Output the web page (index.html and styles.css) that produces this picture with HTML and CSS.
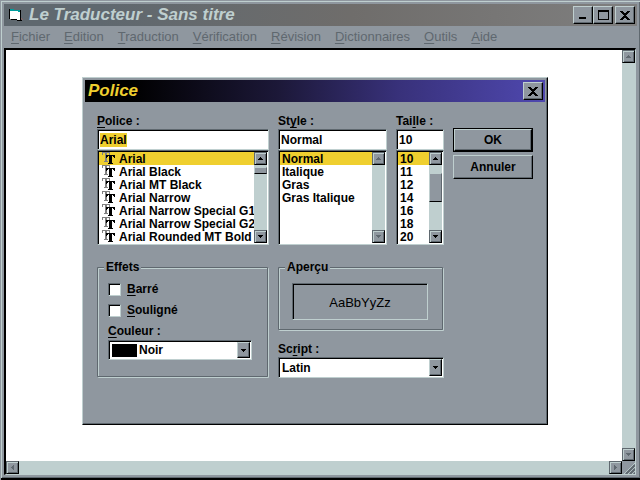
FILE: index.html
```html
<!DOCTYPE html>
<html lang="fr">
<head>
<meta charset="utf-8">
<title>Le Traducteur - Sans titre</title>
<link rel="stylesheet" href="styles.css">
</head>
<body>
<svg class="defs" aria-hidden="true">
  <symbol id="up" viewBox="0 0 5 3"><path d="M2 0h1v1h1v1h1v1H0V2h1V1h1z"/></symbol>
  <symbol id="down" viewBox="0 0 5 3"><path d="M0 0h5v1H4v1H3v1H2V2H1V1H0z"/></symbol>
  <symbol id="left" viewBox="0 0 3 5"><path d="M0 2h1V1h1V0h1v5H2V4H1V3H0z"/></symbol>
  <symbol id="right" viewBox="0 0 3 5"><path d="M0 0h1v1h1v1h1v1H2v1H1v1H0z"/></symbol>
  <symbol id="close" viewBox="0 0 10 9"><path d="M0 0h3v1h1v1h1v1h0V2h1V1h1V0h3v1H9v1H8v1H7v1H6v1h1v1h1v1h1v1h1v1H7V8H6V7H4v1H3v1H0V8h1V7h1V6h1V5h1V4H3V3H2V2H1V1H0z"/></symbol>
</svg>
<div class="window">
  <header class="titlebar">
    <svg class="app-icon" viewBox="0 0 14 14" width="14" height="14" aria-hidden="true">
      <path d="M0 1h5v1h7v10h1v1H8v-1H2v-1H0z" fill="#000"/>
      <path d="M1 3h10v9H8v-1H1z" fill="#fff"/>
      <path d="M1 1h4v1h5v1H1zM8 2h3v2H9V3H8z" fill="#009c9c"/>
      <path d="M12 10h1v1h-1zM13 11h1v1h-1z" fill="#8e6464"/>
    </svg>
    <h1>Le Traducteur - Sans titre</h1>
    <div class="controls">
      <button class="bevel" type="button" aria-label="Réduire"><svg width="8" height="8" viewBox="0 0 8 8"><path d="M0 6h7v2H0z"/></svg></button>
      <button class="bevel" type="button" aria-label="Agrandir"><svg width="11" height="10" viewBox="0 0 11 10"><path fill-rule="evenodd" d="M0 0h11v10H0zM1 2v7h9V2z"/></svg></button>
      <button class="bevel apart" type="button" aria-label="Fermer"><svg width="10" height="9"><use href="#close"/></svg></button>
    </div>
  </header>
  <nav class="menu">
    <button type="button"><u>F</u>ichier</button>
    <button type="button"><u>E</u>dition</button>
    <button type="button"><u>T</u>raduction</button>
    <button type="button"><u>V</u>érification</button>
    <button type="button"><u>R</u>évision</button>
    <button type="button"><u>D</u>ictionnaires</button>
    <button type="button"><u>O</u>utils</button>
    <button type="button"><u>A</u>ide</button>
  </nav>
  <main class="client">
    <div class="page"></div>
    <div class="scroll off">
      <button class="bevel" type="button" aria-label="Haut"><svg width="5" height="3"><use href="#up"/></svg></button>
      <button class="bevel" type="button" aria-label="Bas"><svg width="5" height="3"><use href="#down"/></svg></button>
    </div>
    <div class="scroll across off">
      <button class="bevel" type="button" aria-label="Gauche"><svg width="3" height="5"><use href="#left"/></svg></button>
      <button class="bevel" type="button" aria-label="Droite"><svg width="3" height="5"><use href="#right"/></svg></button>
    </div>
    <svg class="grip" width="13" height="13" viewBox="0 0 13 13" aria-hidden="true">
      <path d="M0 0h13v13H0z" fill="#8f979f"/>
      <path d="M2 13L13 2M6 13L13 6M10 13L13 10" stroke="#bfcfcf"/>
      <path d="M4 13L13 4M8 13L13 8M12 13L13 12" stroke="#5f686f" stroke-width="2"/>
    </svg>
  </main>
</div>

<form class="dialog" role="dialog" aria-labelledby="dialog-title">
  <header class="titlebar">
    <h2 id="dialog-title">Police</h2>
    <div class="controls">
      <button class="bevel" type="button" aria-label="Fermer"><svg width="10" height="9"><use href="#close"/></svg></button>
    </div>
  </header>
  <div class="body">
    <section class="field">
      <label for="font"><u>P</u>olice :</label>
      <div class="sunken"><input class="marked" id="font" type="text" value="Arial"></div>
      <div class="sunken list">
        <select class="fonts" size="7" aria-label="Polices">
          <option selected>Arial</option>
          <option>Arial Black</option>
          <option>Arial MT Black</option>
          <option>Arial Narrow</option>
          <option>Arial Narrow Special G1</option>
          <option>Arial Narrow Special G2</option>
          <option>Arial Rounded MT Bold</option>
        </select>
        <div class="scroll">
          <button class="bevel" type="button" aria-label="Haut"><svg width="5" height="3"><use href="#up"/></svg></button>
          <span class="thumb short"></span>
          <button class="bevel" type="button" aria-label="Bas"><svg width="5" height="3"><use href="#down"/></svg></button>
        </div>
      </div>
    </section>
    <section class="field">
      <label for="style">St<u>y</u>le :</label>
      <div class="sunken"><input id="style" type="text" value="Normal"></div>
      <div class="sunken list">
        <select size="7" aria-label="Styles">
          <option selected>Normal</option>
          <option>Italique</option>
          <option>Gras</option>
          <option>Gras Italique</option>
        </select>
        <div class="scroll off">
          <button class="bevel" type="button" aria-label="Haut"><svg width="5" height="3"><use href="#up"/></svg></button>
          <button class="bevel" type="button" aria-label="Bas"><svg width="5" height="3"><use href="#down"/></svg></button>
        </div>
      </div>
    </section>
    <section class="field">
      <label for="size">Tai<u>l</u>le :</label>
      <div class="sunken"><input id="size" type="text" value="10"></div>
      <div class="sunken list">
        <select size="7" aria-label="Tailles">
          <option selected>10</option>
          <option>11</option>
          <option>12</option>
          <option>14</option>
          <option>16</option>
          <option>18</option>
          <option>20</option>
        </select>
        <div class="scroll">
          <button class="bevel" type="button" aria-label="Haut"><svg width="5" height="3"><use href="#up"/></svg></button>
          <span class="thumb tall"></span>
          <button class="bevel" type="button" aria-label="Bas"><svg width="5" height="3"><use href="#down"/></svg></button>
        </div>
      </div>
    </section>
    <div class="actions">
      <button class="bevel default" type="submit">OK</button>
      <button class="bevel" type="button">Annuler</button>
    </div>
    <fieldset class="effects">
      <legend>Effets</legend>
      <label class="check"><input type="checkbox"><span><u>B</u>arré</span></label>
      <label class="check"><input type="checkbox"><span><u>S</u>ouligné</span></label>
      <label class="caption" for="colour"><u>C</u>ouleur :</label>
      <div class="sunken combo">
        <span class="swatch"></span>
        <select id="colour"><option>Noir</option></select>
        <span class="bevel arrow"><svg width="5" height="3"><use href="#down"/></svg></span>
      </div>
    </fieldset>
    <div class="side">
      <fieldset class="preview">
        <legend>Aperçu</legend>
        <div class="sample">AaBbYyZz</div>
      </fieldset>
      <label for="script">Sc<u>r</u>ipt :</label>
      <div class="sunken combo">
        <select id="script"><option>Latin</option></select>
        <span class="bevel arrow"><svg width="5" height="3"><use href="#down"/></svg></span>
      </div>
    </div>
  </div>
</form>
</body>
</html>
```
FILE: styles.css
```css
:root {
  --face: #8f979f;
  --light: #bfcfcf;
  --dark: #5f686f;
  --pick: #efcf2f;
}
* { box-sizing: border-box; }
body {
  margin: 0;
  font: bold 12px/13px "Liberation Sans", Arial, sans-serif;
  color: #000;
}
.defs { position: absolute; width: 0; height: 0; }
button, input, select, option { font: inherit; color: inherit; margin: 0; border-radius: 0; }
button { padding: 0; border: 0; background: none; }
u { text-underline-offset: 2px; text-decoration-thickness: 1px; text-decoration-skip-ink: none; }

.window {
  display: flex;
  flex-direction: column;
  height: 100vh;
  padding: 4px 3px 5px 4px;
  background: var(--face);
  box-shadow: inset 1px 1px var(--face), inset 0 -2px #000, inset 2px 2px var(--light), inset -1px -3px var(--dark);
}
.titlebar {
  display: flex;
  align-items: center;
  height: 22px;
  padding: 0 2px 0 3px;
  color: var(--light);
  background: linear-gradient(90deg, #5f686f 15%, #6f6d6b 55%, #7f7f7f);
}
.titlebar h1, .titlebar h2 {
  flex: 1;
  margin: 0;
  font: italic bold 17px/22px "Liberation Sans", Arial, sans-serif;
}
.window h1 { padding-left: 6px; }
.app-icon { margin-left: 2px; }
.controls { display: flex; }
.controls .bevel { width: 20px; height: 18px; }
.controls .apart { margin-left: 2px; }
.bevel {
  display: flex;
  align-items: center;
  justify-content: center;
  color: #000;
  background: var(--face);
  border: 1px solid #000;
  border-top-color: var(--light);
  border-left-color: var(--light);
  box-shadow: inset -1px -1px var(--dark);
}
.menu { display: flex; height: 22px; }
.menu button {
  padding: 0 7px;
  font-size: 13px;
  font-weight: normal;
  line-height: 22px;
  color: var(--dark);
}
.client {
  flex: 1;
  display: grid;
  grid-template: 1fr 13px / 1fr 13px;
  margin-right: 1px;
  border: 1px solid var(--light);
  border-top: 2px solid #000;
  border-left: 2px solid #000;
}
.page { background: #fff; }
.grip { display: block; }
.scroll {
  display: flex;
  flex-direction: column;
  width: 13px;
  background: var(--light);
}
.scroll.across { flex-direction: row; width: auto; }
.scroll .bevel { width: 13px; height: 13px; border-color: var(--dark) #000 #000 var(--dark); box-shadow: inset 1px 1px var(--light), inset -1px -1px var(--dark); }
.scroll .bevel:last-child { margin-top: auto; }
.scroll.across .bevel:last-child { margin: 0 0 0 auto; }
.off svg { fill: var(--dark); }
.thumb {
  background: var(--face);
  border: 1px solid var(--light);
  border-right-color: var(--dark);
  border-bottom-color: #000;
}
.thumb.short { margin-top: 2px; height: 7px; }
.thumb.tall { margin-top: 8px; height: 29px; }

.dialog {
  position: absolute;
  left: 82px;
  top: 77px;
  width: 466px;
  padding: 2px;
  background: var(--face);
  border: 1px solid #000;
  border-top-color: var(--light);
  border-left-color: var(--light);
  box-shadow: inset -1px -1px var(--dark);
}
.dialog .titlebar {
  color: var(--pick);
  background: linear-gradient(90deg, #000 10%, #1c1838 42%, #38317a 68%, #4f48af);
}
.body {
  display: grid;
  grid-template-columns: 172px 109px 48px 80px;
  column-gap: 9px;
  row-gap: 15px;
  padding: 12px 12px 44px;
}
.body label { display: block; line-height: 15px; }
.sunken {
  display: flex;
  height: 21px;
  background: #fff;
  border: 1px solid var(--light);
  border-top-color: var(--dark);
  border-left-color: var(--dark);
  box-shadow: inset 1px 1px #000;
  padding: 1px 0 0 1px;
}
.sunken input {
  width: 100%;
  padding: 0 1px;
  border: 0;
  outline: 0;
  background: none;
}
.sunken .marked {
  field-sizing: content;
  width: auto;
  height: 14px;
  align-self: center;
  margin-left: 1px;
  padding: 0;
  background: var(--pick);
}
.list { height: 95px; padding-right: 1px; padding-bottom: 1px; }
select { appearance: none; border: 0; outline: 0; background: none; }
.list select {
  flex: 1;
  min-width: 0;
  height: 91px;
  padding: 0;
  overflow: hidden;
  scrollbar-width: none;
}
.list option {
  height: 13px;
  min-height: 13px;
  padding: 0 2px;
  line-height: 13px;
  color: #000;
}
.list option:checked { color: #000; background-color: var(--pick); background-image: linear-gradient(var(--pick), var(--pick)); }
.list .fonts option, .list .fonts option:checked {
  --glyph: url("data:image/svg+xml,%3Csvg xmlns='http://www.w3.org/2000/svg' width='18' height='13'%3E%3Cpath fill='%23808080' d='M3 0h8v3h-1V1H8v8h1v1H5V9h1V1H4v2H3z'/%3E%3Cpath d='M7 3h9v3h-1V5h-1V4h-1v7h1v1H9v-1h1V4H9v1H8v1H7z'/%3E%3C/svg%3E");
  padding-left: 20px;
  background-repeat: no-repeat;
  background-image: var(--glyph);
}
.list .fonts option:checked { background-image: var(--glyph), linear-gradient(var(--pick), var(--pick)); }
.actions { display: flex; flex-direction: column; gap: 3px; padding-top: 14px; }
.actions .bevel { height: 24px; }
.actions .default { outline: 1px solid #000; outline-offset: -1px; border: 2px solid #000; border-top: 2px solid var(--light); border-left: 2px solid var(--light); }
fieldset {
  min-width: 0;
  margin: 0;
  padding: 0 9px;
  border: 2px solid;
  border-image: url("data:image/svg+xml,%3Csvg xmlns='http://www.w3.org/2000/svg' width='6' height='6' fill='none'%3E%3Cpath stroke='%23bfcfcf' d='M1.5 1.5h4v4h-4z'/%3E%3Cpath stroke='%235f686f' d='M.5.5h4v4h-4z'/%3E%3C/svg%3E") 2;
}
legend { margin-left: -4px; padding: 0 2px; line-height: 15px; }
.effects { height: 118px; }
.body .check {
  display: flex;
  align-items: center;
  gap: 6px;
  height: 21px;
}
.effects .check:first-of-type { margin-top: 4px; }
.body .caption { margin-top: 3px; }
.check input {
  appearance: none;
  width: 13px;
  height: 13px;
  background: #fff;
  border: 1px solid var(--light);
  border-top-color: var(--dark);
  border-left-color: var(--dark);
  box-shadow: inset 1px 1px #000;
}
.combo select { flex: 1; min-width: 0; padding: 0 2px; }
.effects .combo { width: 144px; margin-top: 1px; height: 20px; }
.swatch { width: 25px; margin: 2px 0 2px 2px; background: #000; }
.arrow { width: 13px; margin: 0 1px 1px 0; }
.side { grid-column: 2 / 4; }
.preview { height: 71px; margin-bottom: 11px; padding: 0 14px 0 12px; }
.preview legend { margin-left: -7px; }
.sample {
  height: 37px;
  margin-top: 8px;
  border: 1px solid var(--light);
  border-top-color: var(--dark);
  border-left-color: var(--dark);
  box-shadow: inset 1px 1px #000;
  font-size: 13px;
  font-weight: normal;
  line-height: 37px;
  text-align: center;
}
```
